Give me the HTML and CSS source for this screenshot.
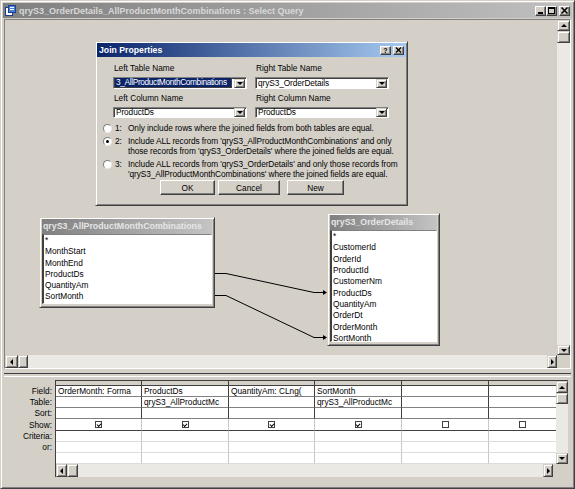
FILE: index.html
```html
<!DOCTYPE html>
<html>
<head>
<meta charset="utf-8">
<link rel="stylesheet" href="styles.css">
</head>
<body>
<div class="window">
  <div class="titlebar">
    <svg class="appicon" width="11" height="11" viewBox="0 0 11 11">
      <rect x="0.5" y="2.5" width="7" height="8" fill="#fff" stroke="#1c3f94"/>
      <rect x="3.5" y="0.5" width="7" height="7" fill="#4a7fd8" stroke="#1c3f94"/>
      <rect x="5" y="2" width="4" height="1" fill="#fff"/>
      <rect x="5" y="4" width="4" height="1" fill="#fff"/>
    </svg>
    <span class="title">qryS3_OrderDetails_AllProductMonthCombinations : Select Query</span>
    <div class="capbtns">
      <span class="capbtn"><svg width="9" height="7" viewBox="0 0 9 7"><rect x="2" y="5" width="5" height="2" fill="#000"/></svg></span>
      <span class="capbtn"><svg width="9" height="7" viewBox="0 0 9 7"><rect x="1.5" y="0.5" width="6" height="6" fill="none" stroke="#000"/><rect x="1" y="0" width="7" height="2" fill="#000"/></svg></span>
      <span class="capbtn gap"><svg width="9" height="7" viewBox="0 0 9 7"><path d="M1.5 0.5 L7.5 6.5 M7.5 0.5 L1.5 6.5" stroke="#000" stroke-width="1.5"/></svg></span>
    </div>
  </div>

  <div class="client">
    <div class="upper">
      <div class="upper-main">
        <div class="canvas">
          <svg class="joins" width="552" height="335" viewBox="5 20 552 335">
            <rect x="213" y="272" width="2" height="3" fill="#000"/>
            <path d="M214 273.5 H226 L314 292.5 H324" fill="none" stroke="#000" stroke-width="1"/>
            <polygon points="323,290 327,292.5 323,295" fill="#000"/>
            <rect x="213" y="294" width="2" height="3" fill="#000"/>
            <path d="M214 295.5 H226 L314 337.5 H324" fill="none" stroke="#000" stroke-width="1"/>
            <polygon points="323,335 327,337.5 323,340" fill="#000"/>
          </svg>

          <div class="fieldlist fl-left">
            <div class="fl-title">qryS3_AllProductMonthCombinations</div>
            <div class="fl-list">
              <div>*</div>
              <div>MonthStart</div>
              <div>MonthEnd</div>
              <div>ProductDs</div>
              <div>QuantityAm</div>
              <div>SortMonth</div>
            </div>
          </div>

          <div class="fieldlist fl-right">
            <div class="fl-title">qryS3_OrderDetails</div>
            <div class="fl-list">
              <div>*</div>
              <div>CustomerId</div>
              <div>OrderId</div>
              <div>ProductId</div>
              <div>CustomerNm</div>
              <div>ProductDs</div>
              <div>QuantityAm</div>
              <div>OrderDt</div>
              <div>OrderMonth</div>
              <div>SortMonth</div>
            </div>
          </div>

          <div class="dialog">
            <div class="dlg-title">
              <span class="dlg-name">Join Properties</span>
              <span class="capbtn small">?</span>
              <span class="capbtn small gap"><svg width="7" height="6" viewBox="0 0 7 6"><path d="M1 0.5 L6 5.5 M6 0.5 L1 5.5" stroke="#000" stroke-width="1.4"/></svg></span>
            </div>
            <div class="dlg-body">
              <div class="fields">
                <div class="flabel">Left Table Name</div>
                <div class="flabel">Right Table Name</div>
                <div class="combo"><span class="ctext sel">3_AllProductMonthCombinations</span><span class="dd"></span></div>
                <div class="combo"><span class="ctext">qryS3_OrderDetails</span><span class="dd"></span></div>
                <div class="flabel l2">Left Column Name</div>
                <div class="flabel l2">Right Column Name</div>
                <div class="combo"><span class="ctext">ProductDs</span><span class="dd"></span></div>
                <div class="combo"><span class="ctext">ProductDs</span><span class="dd"></span></div>
              </div>
              <div class="options">
                <div class="opt">
                  <span class="radio"></span><span class="onum">1:</span>
                  <span class="otext">Only include rows where the joined fields from both tables are equal.</span>
                </div>
                <div class="opt">
                  <span class="radio on"></span><span class="onum">2:</span>
                  <span class="otext">Include ALL records from 'qryS3_AllProductMonthCombinations' and only<br>those records from 'qryS3_OrderDetails' where the joined fields are equal.</span>
                </div>
                <div class="opt">
                  <span class="radio"></span><span class="onum">3:</span>
                  <span class="otext">Include ALL records from 'qryS3_OrderDetails' and only those records from<br>'qryS3_AllProductMonthCombinations' where the joined fields are equal.</span>
                </div>
              </div>
              <div class="buttons">
                <span class="btn ok">OK</span>
                <span class="btn cancel">Cancel</span>
                <span class="btn new">New</span>
              </div>
            </div>
          </div>
        </div>
        <div class="vscroll">
          <span class="sbtn up"></span>
          <span class="thumb"></span>
          <span class="track"></span>
          <span class="sbtn down"></span>
        </div>
      </div>
      <div class="hrow">
        <div class="hscroll">
          <span class="sbtn left"></span>
          <span class="thumb"></span>
          <span class="track"></span>
          <span class="sbtn right"></span>
        </div>
        <div class="corner"></div>
      </div>
    </div>

    <div class="splitter"></div>

    <div class="lower">
      <div class="labels">
        <div class="lab r11">Field:</div>
        <div class="lab r11">Table:</div>
        <div class="lab r11">Sort:</div>
        <div class="lab r12">Show:</div>
        <div class="lab r11">Criteria:</div>
        <div class="lab r11">or:</div>
      </div>
      <div class="qbe">
        <div class="qbe-main">
          <div class="grid">
            <div class="sel"></div><div class="sel"></div><div class="sel"></div><div class="sel"></div><div class="sel"></div><div class="sel last"></div>

            <div class="c">OrderMonth: Forma</div><div class="c">ProductDs</div><div class="c">QuantityAm: CLng(</div><div class="c">SortMonth</div><div class="c"></div><div class="c last"></div>

            <div class="c"></div><div class="c">qryS3_AllProductMc</div><div class="c"></div><div class="c">qryS3_AllProductMc</div><div class="c"></div><div class="c last"></div>

            <div class="c"></div><div class="c"></div><div class="c"></div><div class="c"></div><div class="c"></div><div class="c last"></div>

            <div class="c show"><span class="cb on"></span></div><div class="c show"><span class="cb on"></span></div><div class="c show"><span class="cb on"></span></div><div class="c show"><span class="cb on"></span></div><div class="c show"><span class="cb"></span></div><div class="c show last"><span class="cb"></span></div>

            <div class="c lt"></div><div class="c lt"></div><div class="c lt"></div><div class="c lt"></div><div class="c lt"></div><div class="c lt last"></div>

            <div class="c lt"></div><div class="c lt"></div><div class="c lt"></div><div class="c lt"></div><div class="c lt"></div><div class="c lt last"></div>

            <div class="c lt"></div><div class="c lt"></div><div class="c lt"></div><div class="c lt"></div><div class="c lt"></div><div class="c lt last"></div>
          </div>
          <div class="vscroll gv">
            <span class="sbtn up"></span>
            <span class="thumb"></span>
            <span class="track"></span>
            <span class="sbtn down"></span>
          </div>
        </div>
        <div class="hrow gh">
          <div class="hscroll">
            <span class="sbtn left"></span>
            <span class="thumb"></span>
            <span class="track"></span>
            <span class="sbtn right"></span>
          </div>
          <div class="corner"></div>
        </div>
      </div>
    </div>
  </div>
</div>
</body>
</html>
```

FILE: styles.css
```css
* { box-sizing: border-box; }

body {
  margin: 0;
  width: 575px;
  height: 489px;
  overflow: hidden;
  background: #d4d0c8;
  font-family: "Liberation Sans", Arial, sans-serif;
  font-size: 8.3px;
  color: #000;
}

.window {
  width: 575px;
  height: 489px;
  border: 1px solid;
  border-color: #d4d0c8 #404040 #404040 #d4d0c8;
  box-shadow: inset 1px 1px #fff, inset -1px -1px #808080;
  padding: 2px;
  display: flex;
  flex-direction: column;
  background: #d4d0c8;
}

/* main title bar */
.titlebar {
  height: 15px;
  flex: none;
  background: linear-gradient(to right, #808080, #c0c0c0);
  display: flex;
  align-items: center;
  padding: 0 2px 0 2px;
}
.appicon { flex: none; margin-right: 3px; }
.title {
  flex: 1;
  color: #d8d8d8;
  font-weight: bold;
  font-size: 9px;
  white-space: nowrap;
}
.capbtns { display: flex; }
.capbtn {
  width: 11px;
  height: 10px;
  background: #d4d0c8;
  border: 1px solid;
  border-color: #fff #404040 #404040 #fff;
  box-shadow: inset -1px -1px #808080;
  display: flex;
  align-items: center;
  justify-content: center;
}
.capbtn.gap { margin-left: 2px; }
.capbtn.small {
  width: 11px;
  height: 9px;
  font-weight: bold;
  font-size: 7px;
  line-height: 7px;
}

/* client */
.client {
  flex: 1;
  margin: 1px 1px 0 1px;
  display: flex;
  flex-direction: column;
}

.upper {
  height: 350px;
  flex: none;
  border: 1px solid;
  border-color: #808080 #fff #fff #808080;
  display: flex;
  flex-direction: column;
}
.upper-main {
  flex: 1;
  display: flex;
  min-height: 0;
}
.canvas {
  flex: 1;
  position: relative;
  overflow: hidden;
  background: #d4d0c8;
}

/* scrollbars */
.vscroll {
  width: 13px;
  flex: none;
  display: flex;
  flex-direction: column;
  background: #ebe9e4;
}
.vscroll .sbtn { height: 11px; }
.vscroll .sbtn.down { height: 10px; }
.vscroll .thumb { height: 12px; }
.track { flex: 1; background: #ebe9e4; }
.thumb {
  flex: none;
  background: #d4d0c8;
  border: 1px solid;
  border-color: #d4d0c8 #404040 #404040 #d4d0c8;
  box-shadow: inset 1px 1px #fff, inset -1px -1px #808080;
}
.sbtn {
  flex: none;
  background: #d4d0c8;
  border: 1px solid;
  border-color: #d4d0c8 #404040 #404040 #d4d0c8;
  box-shadow: inset 1px 1px #fff, inset -1px -1px #808080;
  display: flex;
  align-items: center;
  justify-content: center;
}
.sbtn::after { content: ""; width: 0; height: 0; }
.sbtn.up::after { border-left: 3px solid transparent; border-right: 3px solid transparent; border-bottom: 3px solid #000; }
.sbtn.down::after { border-left: 3px solid transparent; border-right: 3px solid transparent; border-top: 3px solid #000; }
.sbtn.left::after { border-top: 3px solid transparent; border-bottom: 3px solid transparent; border-right: 3px solid #000; }
.sbtn.right::after { border-top: 3px solid transparent; border-bottom: 3px solid transparent; border-left: 3px solid #000; }

.hrow {
  height: 13px;
  flex: none;
  display: flex;
}
.hscroll {
  flex: 1;
  display: flex;
  background: #ebe9e4;
}
.hscroll .sbtn { width: 13px; }
.hscroll .sbtn.right { width: 10px; }
.hscroll .thumb { width: 10px; }
.corner { width: 13px; background: #d4d0c8; }

.splitter {
  height: 11px;
  flex: none;
  padding-top: 4px;
}
.splitter::before {
  content: "";
  display: block;
  height: 2px;
  border-top: 1px solid #404040;
  border-bottom: 1px solid #fff;
}

/* design canvas items */
.joins { position: absolute; left: 0; top: 0; }

.fieldlist {
  position: absolute;
  background: #d4d0c8;
  border: 1px solid;
  border-color: #d4d0c8 #404040 #404040 #d4d0c8;
  box-shadow: inset 1px 1px #fff, inset -1px -1px #808080;
  padding: 1px 2px 3px 2px;
  display: flex;
  flex-direction: column;
}
.fl-left { left: 34px; top: 197px; width: 176px; height: 91px; }
.fl-right { left: 322px; top: 193px; width: 113px; height: 133px; }
.fl-title {
  height: 15px;
  flex: none;
  background: linear-gradient(to right, #808080, #c4c4c4);
  color: #e6e6e6;
  font-weight: bold;
  font-size: 8.8px;
  line-height: 15px;
  padding-left: 1px;
  white-space: nowrap;
  overflow: hidden;
}
.fl-list {
  flex: 1;
  background: #fff;
  border: 1px solid;
  border-color: #808080 #fff #fff #404040;
  border-left-width: 2px;
  padding-left: 1px;
  overflow: hidden;
}
.fl-list div { height: 11.25px; line-height: 11.25px; white-space: nowrap; }
.fl-right .fl-list div { height: 11.33px; line-height: 11.33px; }

/* dialog */
.dialog {
  position: absolute;
  left: 90px;
  top: 21px;
  width: 313px;
  height: 165px;
  background: #d4d0c8;
  border: 1px solid;
  border-color: #d4d0c8 #404040 #404040 #d4d0c8;
  box-shadow: inset 1px 1px #fff, inset -1px -1px #808080;
  padding: 1px;
  display: flex;
  flex-direction: column;
}
.dlg-title {
  height: 14px;
  flex: none;
  background: linear-gradient(to right, #0a246a, #a6caf0);
  display: flex;
  align-items: center;
  padding: 0 2px 0 2px;
}
.dlg-name {
  flex: 1;
  color: #fff;
  font-weight: bold;
  font-size: 8.7px;
}
.dlg-body {
  flex: 1;
  padding: 5px 0 0 16px;
}
.fields {
  display: grid;
  grid-template-columns: 134px 134px;
  grid-template-rows: 13px 12px 13px 12px;
  column-gap: 8px;
  row-gap: 2px;
}
.flabel { line-height: 13px; white-space: nowrap; padding-left: 1px; }
.flabel.l2 { margin-top: 1px; }
.combo {
  background: #fff;
  border: 1px solid;
  border-color: #808080 #fff #fff #808080;
  box-shadow: inset 1px 1px #404040;
  display: flex;
  align-items: center;
  padding: 1px 1px 1px 2px;
  overflow: hidden;
}
.fields .combo:nth-child(7), .fields .combo:nth-child(8) { margin-top: 1px; }
.ctext { flex: 1; white-space: nowrap; overflow: hidden; line-height: 9px; letter-spacing: -0.1px; }
.ctext.sel { background: #0a246a; color: #fff; margin-left: -1px; padding-left: 1px; letter-spacing: -0.35px; }
.dd {
  flex: none;
  width: 11px;
  height: 9px;
  margin-left: 2px;
  background: #d4d0c8;
  border: 1px solid;
  border-color: #d4d0c8 #404040 #404040 #d4d0c8;
  box-shadow: inset 1px 1px #fff, inset -1px -1px #808080;
  display: flex;
  align-items: center;
  justify-content: center;
}
.dd::after {
  content: "";
  border-left: 3px solid transparent;
  border-right: 3px solid transparent;
  border-top: 3px solid #000;
}

.options {
  margin: 5px 0 0 -10px;
  display: flex;
  flex-direction: column;
  gap: 3px;
}
.opt { display: flex; align-items: flex-start; line-height: 10px; }
.radio {
  flex: none;
  width: 9px;
  height: 9px;
  margin-top: 1px;
  border-radius: 50%;
  background: #fff;
  border: 1px solid;
  border-color: #808080 #e8e8e8 #e8e8e8 #808080;
  display: flex;
  align-items: center;
  justify-content: center;
}
.radio.on::after {
  content: "";
  width: 3px;
  height: 3px;
  border-radius: 50%;
  background: #000;
}
.onum { flex: none; width: 16px; padding-left: 3px; }
.otext { white-space: nowrap; letter-spacing: -0.08px; }

.buttons {
  display: flex;
  margin: 1px 0 0 47px;
}
.btn {
  height: 15px;
  display: flex;
  align-items: center;
  justify-content: center;
  background: #d4d0c8;
  border: 1px solid;
  border-color: #fff #404040 #404040 #fff;
  box-shadow: inset -1px -1px #808080;
}
.btn.ok { width: 55px; }
.btn.cancel { width: 62px; margin-left: 3px; }
.btn.new { width: 57px; margin-left: 7px; }

/* lower pane */
.lower {
  flex: 1;
  display: flex;
}
.labels {
  width: 51px;
  flex: none;
  padding-top: 6px;
  text-align: right;
  padding-right: 3px;
}
.lab { line-height: 11px; height: 11px; }
.lab.r12 { height: 12px; line-height: 12px; }

.qbe {
  width: 513px;
  height: 97px;
  flex: none;
  border-top: 1px solid #404040;
  border-left: 1px solid #404040;
  display: flex;
  flex-direction: column;
}
.qbe-main { flex: 1; display: flex; }
.grid {
  width: 500px;
  display: grid;
  grid-template-columns: 86px 87px 86px 87px 87px 67px;
  grid-template-rows: 5px 11px 11px 11px 12px 11px 11px 11px;
  background: #fff;
}
.sel {
  background: #d4d0c8;
  border-right: 1px solid #404040;
  border-bottom: 1px solid #404040;
}
.c {
  border-right: 1px solid #404040;
  border-bottom: 1px solid #808080;
  padding-left: 2px;
  line-height: 10px;
  white-space: nowrap;
  overflow: hidden;
}
.c.show {
  border-right-color: #c8c8c8;
  border-bottom-color: #404040;
  display: flex;
  align-items: center;
  justify-content: center;
  padding: 0;
}
.c.lt {
  border-right-color: #c8c8c8;
  border-bottom-color: #dcdcdc;
}
.grid .last { border-right: 0; }
.cb {
  width: 7px;
  height: 7px;
  border: 1px solid #404040;
  background: #fff;
  display: flex;
  align-items: center;
  justify-content: center;
}
.cb.on::after {
  content: "";
  width: 3px;
  height: 2px;
  margin-top: -1px;
  border-left: 1px solid #000;
  border-bottom: 1px solid #000;
  transform: rotate(-45deg);
}
.vscroll.gv { width: 12px; }
.gv .sbtn.up { height: 12px; }
.gv .thumb { height: 11px; }
.gv .sbtn.down { height: 11px; }
.hrow.gh .sbtn.left { width: 11px; }
.hrow.gh .thumb { width: 11px; }
.hrow.gh .corner { width: 15px; }
```
